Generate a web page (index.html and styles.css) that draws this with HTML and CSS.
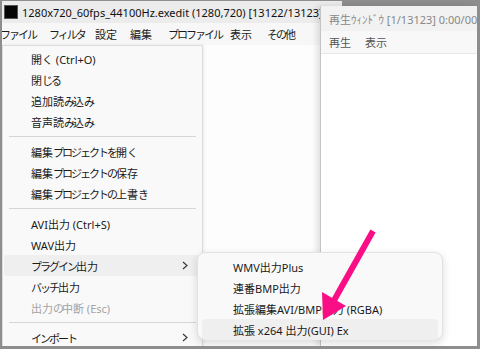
FILE: index.html
```html
<!DOCTYPE html>
<html lang="ja">
<head>
    <meta charset="UTF-8">
    <title>AviUtl</title>
    <link rel="stylesheet" href="styles.css">
</head>
<body>
    <div class="frame">
        <div class="screen">
            <div class="main-window">
                <div class="titlebar">
                    <span class="app-icon"></span>
                    <span class="title">1280x720_60fps_44100Hz.exedit (1280,720) [13122/13123]</span>
                </div>
                <ul class="menubar">
                    <li class="k">ファイル</li>
                    <li class="k">フィルタ</li>
                    <li>設定</li>
                    <li>編集</li>
                    <li class="k">プロファイル</li>
                    <li>表示</li>
                    <li><span class="k">その</span>他</li>
                </ul>
                <div class="content"></div>
            </div>

            <div class="play-window">
                <div class="play-title">再生ｳｨﾝﾄﾞｳ [1/13123] 0:00/00:00</div>
                <ul class="play-menu">
                    <li>再生</li>
                    <li>表示</li>
                </ul>
                <div class="content"></div>
            </div>

            <div class="dropdown">
                <div class="item">開く (Ctrl+O)</div>
                <div class="item">閉<span class="k">じる</span></div>
                <div class="item">追加読<span class="k">み</span>込<span class="k">み</span></div>
                <div class="item">音声読<span class="k">み</span>込<span class="k">み</span></div>
                <div class="sep"></div>
                <div class="item">編集<span class="k">プロジェクトを</span>開<span class="k">く</span></div>
                <div class="item">編集<span class="k">プロジェクトの</span>保存</div>
                <div class="item">編集<span class="k">プロジェクトの</span>上書<span class="k">き</span></div>
                <div class="sep"></div>
                <div class="item">AVI出力 (Ctrl+S)</div>
                <div class="item">WAV出力</div>
                <div class="item active"><span class="k">プラグイン</span>出力
                    <svg class="chev" width="6" height="9" viewBox="0 0 6 9"><path d="M1 1 L5 4.5 L1 8" fill="none" stroke="#333" stroke-width="1.1"/></svg>
                </div>
                <div class="item"><span class="k">バッチ</span>出力</div>
                <div class="item disabled">出力<span class="k">の</span>中断 (Esc)</div>
                <div class="sep"></div>
                <div class="item"><span class="k">インポート</span>
                    <svg class="chev" width="6" height="9" viewBox="0 0 6 9"><path d="M1 1 L5 4.5 L1 8" fill="none" stroke="#333" stroke-width="1.1"/></svg>
                </div>
            </div>

            <div class="submenu">
                <div class="item">WMV出力Plus</div>
                <div class="item">連番BMP出力</div>
                <div class="item">拡張編集AVI/BMP出力 (RGBA)</div>
                <div class="item active">拡張 x264 出力(GUI) Ex</div>
            </div>

            <svg class="arrow" width="476" height="345" viewBox="0 0 476 345">
                <line x1="371" y1="230" x2="330" y2="303" stroke="#f90e85" stroke-width="6"/>
                <polygon points="321,319 320,291 344,305" fill="#f90e85"/>
            </svg>
        </div>
    </div>
</body>
</html>
```

FILE: styles.css
```css
* {
    margin: 0;
    padding: 0;
    box-sizing: border-box;
}

body {
    font-family: "Noto Sans", "Noto Sans CJK JP", sans-serif;
    color: #1a1a1a;
    background: #8e8e8e;
}

ul {
    list-style: none;
}

/* kana runs are set tighter, like the proportional kana of the UI font */
.k {
    letter-spacing: -2px;
}

.frame {
    width: 480px;
    height: 349px;
    padding: 1px 3px 3px 2px;
    background: #8e8e8e;
    overflow: hidden;
}

.screen {
    position: relative;
    height: 100%;
    overflow: hidden;
}

/* main window */

.main-window {
    position: absolute;
    left: 0;
    top: 0;
    width: 340px;
    height: 100%;
    display: flex;
    flex-direction: column;
    background: #fdfdfd;
}

.titlebar {
    height: 22px;
    display: flex;
    align-items: center;
    background: #ececec;
    padding-left: 2px;
    white-space: nowrap;
}

.app-icon {
    width: 14px;
    height: 14px;
    background: #050505;
    border: 1px solid #555;
    margin-right: 4px;
}

.title {
    font-size: 11px;
    color: #111;
}

.menubar {
    height: 22px;
    display: grid;
    grid-template-columns: 49px 46px 35px 38px 62px 37px auto;
    align-items: center;
    margin-left: -2px;
    background: #f7f7f7;
    font-size: 11px;
    white-space: nowrap;
}

.main-window .content {
    flex: 1;
}

/* play window */

.play-window {
    position: absolute;
    left: 318px;
    top: 5px;
    right: 0;
    bottom: 0;
    display: flex;
    flex-direction: column;
    background: #fff;
    border-left: 1px solid #c4c4c4;
    box-shadow: -3px 0 6px rgba(0, 0, 0, 0.12);
}

.play-title {
    height: 25px;
    display: flex;
    align-items: center;
    padding-left: 8px;
    background: #f2f2f2;
    color: #888;
    font-size: 11px;
    white-space: nowrap;
}

.play-menu {
    height: 23px;
    display: flex;
    align-items: center;
    gap: 14px;
    padding-left: 8px;
    background: #f8f8f8;
    border-bottom: 1px solid #e8e8e8;
    color: #555;
    font-size: 11px;
}

.play-window .content {
    flex: 1;
}

/* menus */

.dropdown {
    position: absolute;
    left: 0;
    top: 44px;
    width: 201px;
    bottom: -4px;
    padding-top: 2px;
    background: #f9f9f9;
    border: 1px solid #dcdcdc;
    box-shadow: 1px 0 3px rgba(0, 0, 0, 0.08);
    font-size: 11px;
}

.item {
    position: relative;
    height: 21px;
    display: flex;
    align-items: center;
    white-space: nowrap;
}

.dropdown .item {
    padding-left: 27px;
    margin: 0 2px 0 1px;
}

.item.active {
    background: #efefef;
    border-radius: 4px;
}

.item.disabled {
    color: #a3a3a3;
}

.chev {
    position: absolute;
    left: 178px;
    top: 6px;
}

.sep {
    height: 9px;
    display: flex;
    align-items: center;
    margin: 0 6px;
}

.sep::after {
    content: "";
    flex: 1;
    border-top: 1px solid #d6d6d6;
}

.submenu {
    position: absolute;
    left: 195px;
    top: 251px;
    width: 246px;
    height: 88px;
    padding: 3px 4px 2px;
    background: #f9f9f9;
    border: 1px solid #e2e2e2;
    border-radius: 8px;
    box-shadow: 0 3px 8px rgba(0, 0, 0, 0.14);
    font-size: 11px;
}

.submenu .item {
    padding-left: 31px;
}

.arrow {
    position: absolute;
    left: 0;
    top: 0;
    pointer-events: none;
}
```
